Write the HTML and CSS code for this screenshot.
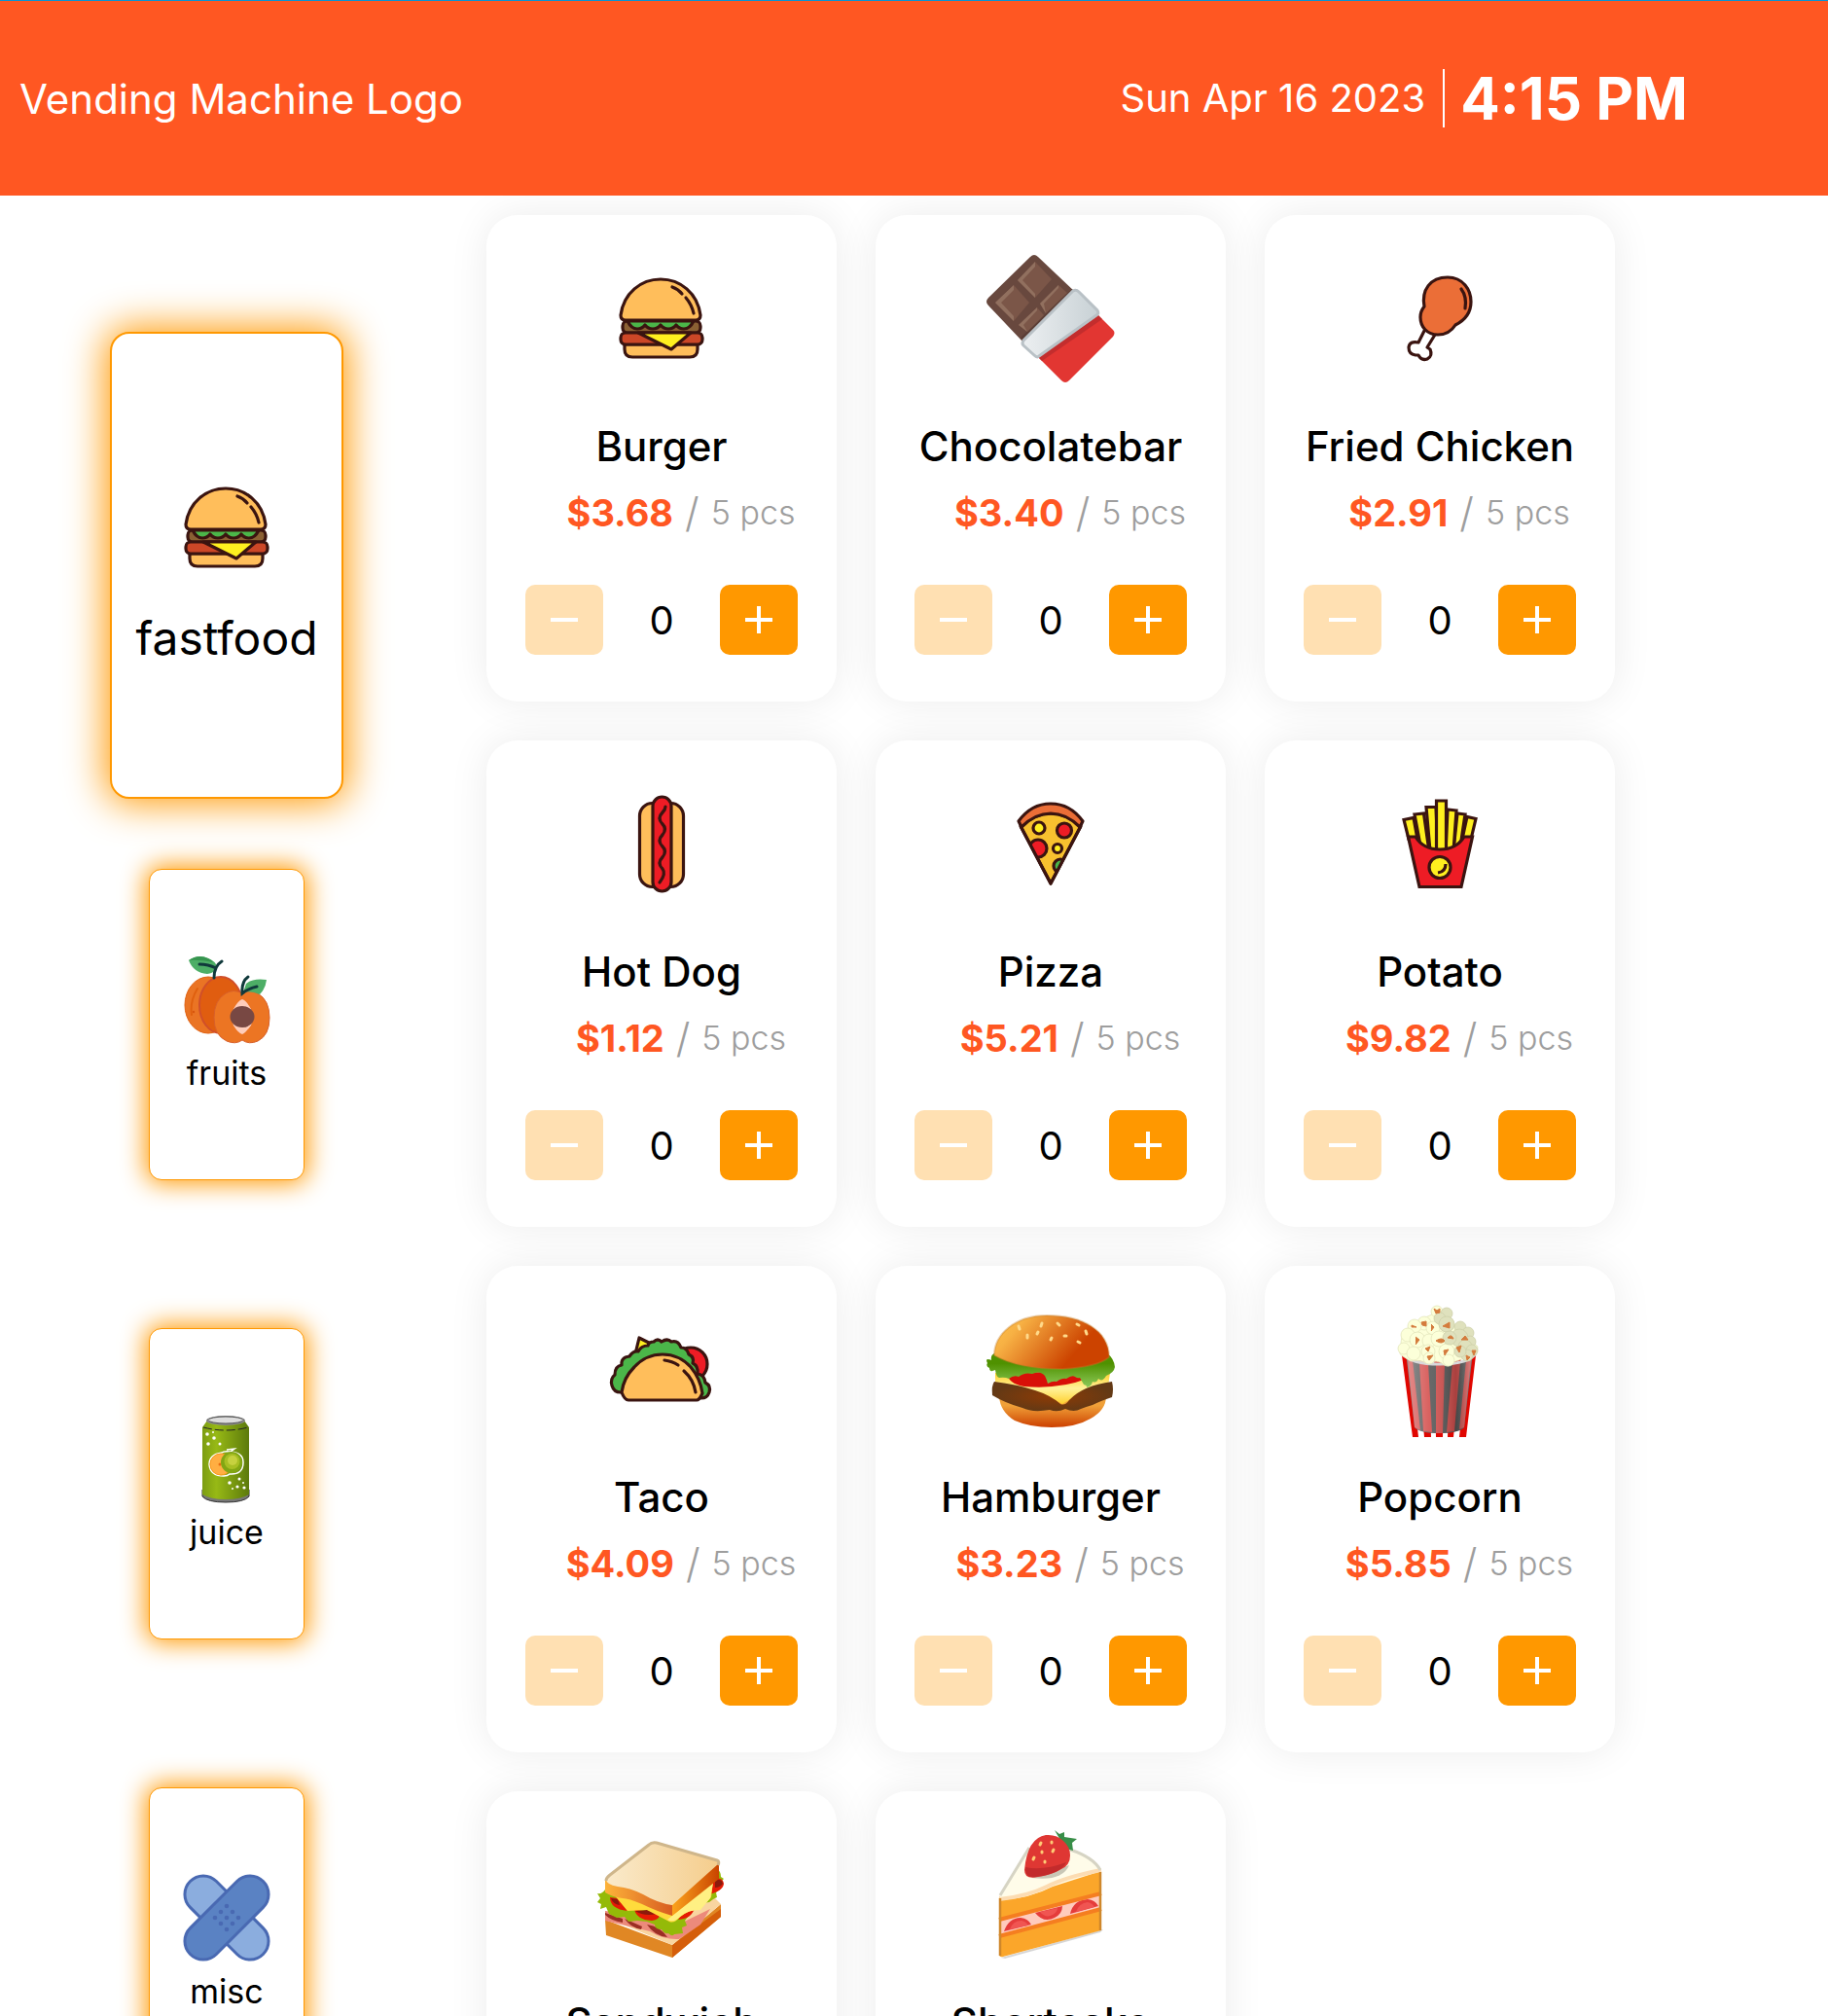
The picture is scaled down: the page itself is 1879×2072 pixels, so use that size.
FILE: index.html
```html
<!DOCTYPE html>
<html lang="en">
<head>
<meta charset="utf-8">
<meta name="viewport" content="width=device-width, initial-scale=1">
<title>Vending Machine</title>
<link rel="stylesheet" href="styles.css">
</head>
<body>
<svg class="defs" aria-hidden="true">
  <defs>
    <symbol id="burger" viewBox="0 0 132 132">
      <g stroke="#3a1410" stroke-width="3.2" stroke-linejoin="round" stroke-linecap="round">
        <path fill="#ffbe5b" d="M28 93h75v5q0 8-8 8H36q-8 0-8-8z"/>
        <rect x="26" y="69" width="80" height="12" rx="5" fill="#8b6033"/>
        <path fill="#4bb649" d="M31 69q4 8 10 8 5 0 8-4 3 4 8 4t8-4q3 4 8 4t8-4q3 4 8 4 6 0 10-8z"/>
        <rect x="24" y="81" width="84" height="12" rx="5" fill="#cc4727"/>
        <path fill="#fff01f" d="M42 81h54L76 98z"/>
        <path fill="#ffbe5b" d="M24 63C27 40 45 26 65 26S103 40 106 63q0 5-5 5H29q-5 0-5-5z"/>
        <path fill="none" d="M77 34q6 2 10 7M91 45q6 7 8 16"/>
      </g>
    </symbol>
    <symbol id="minus" viewBox="0 0 28 28"><path d="M0 14h28" stroke="#fff" stroke-width="4"/></symbol>
    <symbol id="plus" viewBox="0 0 28 28"><path d="M0 14h28M14 0v28" stroke="#fff" stroke-width="4"/></symbol>
    <linearGradient id="foil"><stop stop-color="#eceff1"/><stop offset="1" stop-color="#c8d1d5"/></linearGradient>
    <linearGradient id="bunTop" x2="1" y2=".4"><stop stop-color="#ffc24b"/><stop offset=".25" stop-color="#f7b144"/><stop offset=".85" stop-color="#cc4300"/></linearGradient>
    <linearGradient id="bunBase" x2="0" y2="1"><stop offset=".3" stop-color="#f0a038"/><stop offset="1" stop-color="#cc4000"/></linearGradient>
    <linearGradient id="leafy" x2="0" y2="1"><stop offset=".3" stop-color="#4f9100"/><stop offset="1" stop-color="#8cc95a"/></linearGradient>
    <linearGradient id="cheese" x2="0" y2="1"><stop stop-color="#ffd02e"/><stop offset=".5" stop-color="#fff29a"/><stop offset="1" stop-color="#ffd02e"/></linearGradient>
    <radialGradient id="patty"><stop stop-color="#8e3b05"/><stop offset="1" stop-color="#633915"/></radialGradient>
    <linearGradient id="bread"><stop stop-color="#faeacb"/><stop offset="1" stop-color="#f5cd8c"/></linearGradient>
    <linearGradient id="crustFront"><stop stop-color="#fdb33a"/><stop offset="1" stop-color="#d85d20"/></linearGradient>
    <linearGradient id="crustSide"><stop stop-color="#fba31c"/><stop offset="1" stop-color="#c94400"/></linearGradient>
    <linearGradient id="can"><stop stop-color="#7c9d12"/><stop offset=".3" stop-color="#97b915"/><stop offset="1" stop-color="#5c7a0c"/></linearGradient>
    <linearGradient id="bucketShade"><stop stop-color="#fff" stop-opacity=".35"/><stop offset=".35" stop-color="#fff" stop-opacity=".1"/><stop offset=".75" stop-color="#000" stop-opacity=".2"/><stop offset="1" stop-color="#fff" stop-opacity=".3"/></linearGradient>
  </defs>
</svg>

<header class="topbar">
  <div class="logo">Vending Machine Logo</div>
  <div class="clock">
    <span class="date">Sun Apr 16 2023</span>
    <time class="time" datetime="16:15">4:15 PM</time>
  </div>
</header>

<main class="shop">
  <nav class="categories" aria-label="Categories">
    <button class="category active" type="button">
      <svg class="category-icon" viewBox="0 0 132 132" aria-hidden="true"><use href="#burger"/></svg>
      <span class="category-name">fastfood</span>
    </button>
    <button class="category" type="button">
      <svg class="category-icon" viewBox="0 0 88 88" aria-hidden="true">
        <ellipse cx="25" cy="50" rx="24" ry="29" fill="#ea7424" stroke="#e0600f"/>
        <path d="M14 33q-8 13-6 27" fill="none" stroke="#e0600f" stroke-width="2" stroke-linecap="round"/><circle cx="10" cy="57" r="1.200" fill="#d8550f"/>
        <ellipse cx="38" cy="50" rx="22" ry="29" fill="#e05d10" stroke="#d04f2a" stroke-width="2"/>
        <path d="M60 38q-9-5-17 0-12 7-12 25 0 18 13 24 9 4 16-1 7 5 16 1 12-6 12-24 0-18-12-25-8-4-16 0z" fill="#ec7523" stroke="#d8602a"/>
        <path d="M60 44q4 1 9 10l2 8-2 9q-6 8-9 9-4-1-9-9l-2-9 2-8q5-9 9-10z" fill="#ffcdbb"/>
        <ellipse cx="60" cy="62" rx="12.500" ry="11" fill="#784843"/>
        <path d="M5 4Q15-3 25 2q8 3 9 9-2 6-10 7Q10 17 5 4z" fill="#4dae66"/><path d="M5 4Q15-3 25 2q4 2 5 4-15-3-25-2z" fill="#36954f"/>
        <path d="M85 24q-14-2-21 4l-3 9q8-2 17 2 6-6 7-15z" fill="#4dae66"/>
        <path d="M39 5q-8 5-8 17M16 8q9 0 17 4M66 21q-7 5-6 17 6-5 15-7" fill="none" stroke="#10393b" stroke-width="3" stroke-linecap="round"/>
      </svg>
      <span class="category-name">fruits</span>
    </button>
    <button class="category" type="button">
      <svg class="category-icon" viewBox="0 0 88 88" aria-hidden="true">
        <path d="M19 76v7q5 6 24 6t24-6v-7z" fill="#777" stroke="#333"/>
        <path d="M24 5L19 12v69q8 5 24 5t24-5V12L62 5z" fill="url(#can)"/>
        <ellipse cx="43" cy="5" rx="20" ry="5" fill="#888"/><ellipse cx="43" cy="4.500" rx="18" ry="3.500" fill="#ddd" stroke="#555"/>
        <path d="M20 12q23 6 46 0" fill="none" stroke="#222" stroke-dasharray="9 3"/>
        <path d="M48 37q-7-1-9 1-13 2-13 12 1 12 15 12 4 0 6-2 14 1 14-12 0-10-13-11l4-3-8 1" fill="none" stroke="#fff" stroke-width="1.500"/>
        <circle cx="38" cy="50" r="11" fill="#ffae42" stroke="#fa9a20"/><circle cx="37" cy="50" r="1.500" fill="#e76c10"/>
        <circle cx="49" cy="48" r="11" fill="#82a613"/><circle cx="49.500" cy="47" r="8" fill="#a8bf23"/><circle cx="50" cy="46" r="5" fill="#c6d13f"/>
        <g fill="#fff"><circle cx="24" cy="19" r="1.800"/><circle cx="31" cy="23" r="1.800"/><circle cx="25" cy="29" r="1.800"/><circle cx="37" cy="29" r="1.500"/><circle cx="30" cy="17" r="1"/><circle cx="47" cy="69" r="1.800"/><circle cx="57" cy="65" r="1.500"/><circle cx="55" cy="73" r="1.600"/><circle cx="62" cy="74" r="1.600"/><circle cx="50" cy="75" r="1"/><circle cx="61" cy="69" r="1"/></g>
      </svg>
      <span class="category-name">juice</span>
    </button>
    <button class="category" type="button">
      <svg class="category-icon" viewBox="0 0 88 88" aria-hidden="true">
        <g stroke="#4969b2" stroke-width="3">
          <rect x="-9" y="25" width="106" height="38" rx="19" fill="#8badde" transform="rotate(45 44 44)"/>
          <rect x="-9" y="25" width="106" height="38" rx="19" fill="#5a82c3" transform="rotate(-45 44 44)"/>
        </g>
        <g fill="#4969b2"><circle cx="44" cy="32" r="2.300"/><circle cx="38" cy="38" r="2.300"/><circle cx="50" cy="38" r="2.300"/><circle cx="32" cy="44" r="2.300"/><circle cx="44" cy="44" r="2.300"/><circle cx="56" cy="44" r="2.300"/><circle cx="38" cy="50" r="2.300"/><circle cx="50" cy="50" r="2.300"/><circle cx="44" cy="56" r="2.300"/></g>
      </svg>
      <span class="category-name">misc</span>
    </button>
  </nav>

  <section class="products" aria-label="Products">
    <article class="card">
      <svg class="card-icon" viewBox="0 0 132 132" aria-hidden="true"><use href="#burger"/></svg>
      <h2 class="card-name">Burger</h2>
      <p class="card-price"><strong>$3.68</strong> <span class="slash">/</span> <span class="stock">5 pcs</span></p>
      <div class="stepper"><button class="step" type="button" disabled aria-label="Remove Burger"><svg class="sign"><use href="#minus"/></svg></button><output class="count">0</output><button class="step" type="button" aria-label="Add Burger"><svg class="sign"><use href="#plus"/></svg></button></div>
    </article>

    <article class="card">
      <svg class="card-icon" viewBox="0 0 132 132" aria-hidden="true">
        <path d="M45 3q4-4 8 0l38 36-53 52L2 53q-4-4 0-8z" fill="#68483e"/>
        <path d="M88 36l4 4-53 50-4-4z" fill="#4e342e" opacity=".5"/>
        <g fill="#7b5648"><path d="M50 8l17 18-17 19-18-18z"/><path d="M28 32l16 18-16 19L9 50z"/><path d="M74 32l9 8-22 21-6-10z"/><path d="M52 55l7 8-17 17-9-7z"/></g>
        <path d="M50 8v5L37 27l13 14v4L32 27zM28 32v5L15 50l13 14v5L9 50zM74 32v3L59 51l2 10-6-10zM52 55v3L38 73l4 7-9-7z" fill="#91705f"/>
        <path d="M115 63l15 15q3 3 0 7l-45 45q-4 4-8 0L53 106z" fill="#e23632"/>
        <path d="M115 63l4 4-62 43-4-4z" fill="#b72a2b" opacity=".7"/>
        <path d="M89 38q3-2 6 1l19 19q2 3-1 5l-59 42q-2 2-5-1L38 94q-2-2 0-5z" fill="url(#foil)" stroke="#b9c1c6" stroke-width="3"/>
      </svg>
      <h2 class="card-name">Chocolatebar</h2>
      <p class="card-price"><strong>$3.40</strong> <span class="slash">/</span> <span class="stock">5 pcs</span></p>
      <div class="stepper"><button class="step" type="button" disabled aria-label="Remove Chocolatebar"><svg class="sign"><use href="#minus"/></svg></button><output class="count">0</output><button class="step" type="button" aria-label="Add Chocolatebar"><svg class="sign"><use href="#plus"/></svg></button></div>
    </article>

    <article class="card">
      <svg class="card-icon" viewBox="0 0 132 132" aria-hidden="true">
        <g stroke="#3a1410" stroke-width="3.200" stroke-linejoin="round" stroke-linecap="round">
          <path fill="#fff" d="M51 77l-7 14q-9-2-10 5 0 7 7 8h3q3 6 9 4 6-3 3-10l-3-2 8-13z"/>
          <path fill="#eb6e37" d="M50 54C47 37 56 24 74 24c16 0 24 13 24 25 0 13-8 20-16 24-5 8-11 10-18 10-11 0-18-8-18-18q0-6 4-11z"/>
          <path fill="none" d="M88 36q6 8 4 20"/>
        </g>
      </svg>
      <h2 class="card-name">Fried Chicken</h2>
      <p class="card-price"><strong>$2.91</strong> <span class="slash">/</span> <span class="stock">5 pcs</span></p>
      <div class="stepper"><button class="step" type="button" disabled aria-label="Remove Fried Chicken"><svg class="sign"><use href="#minus"/></svg></button><output class="count">0</output><button class="step" type="button" aria-label="Add Fried Chicken"><svg class="sign"><use href="#plus"/></svg></button></div>
    </article>

    <article class="card">
      <svg class="card-icon" viewBox="0 0 132 132" aria-hidden="true">
        <g stroke="#3a1410" stroke-width="3.200" stroke-linecap="round">
          <rect x="43.500" y="24.500" width="45" height="86" rx="13" fill="#ffbe5b"/>
          <rect x="57" y="18" width="19" height="97" rx="9.500" fill="#ee1c25"/>
          <path fill="none" d="M70 28q0 3-3 6-6 6 0 12 5 5 0 11-6 6 0 12 5 5 0 11-6 6 0 12 4 5-3 14"/>
        </g>
      </svg>
      <h2 class="card-name">Hot Dog</h2>
      <p class="card-price"><strong>$1.12</strong> <span class="slash">/</span> <span class="stock">5 pcs</span></p>
      <div class="stepper"><button class="step" type="button" disabled aria-label="Remove Hot Dog"><svg class="sign"><use href="#minus"/></svg></button><output class="count">0</output><button class="step" type="button" aria-label="Add Hot Dog"><svg class="sign"><use href="#plus"/></svg></button></div>
    </article>

    <article class="card">
      <svg class="card-icon" viewBox="0 0 132 132" aria-hidden="true">
        <clipPath id="slice"><path d="M36 48Q66 22 96 48L66 107z"/></clipPath>
        <g stroke="#3a1410" stroke-width="3.200" stroke-linejoin="round">
          <path fill="#f8c12f" d="M35 48Q66 22 97 48L66 107z"/>
          <g clip-path="url(#slice)"><circle cx="53" cy="71" r="9" fill="#ee1c25"/><circle cx="76" cy="89" r="7" fill="#4bb649"/></g>
          <circle cx="54" cy="50" r="6" fill="#fff01f"/><circle cx="80" cy="52.500" r="7.500" fill="#ee1c25"/><circle cx="73" cy="71" r="4.500" fill="#fff01f"/>
          <path fill="none" d="M35 48L66 107 97 48"/>
          <path fill="#eb6e37" d="M33 43Q46 25 66 25t33 18l-3 6Q82 35 66 35T36 49z"/>
        </g>
      </svg>
      <h2 class="card-name">Pizza</h2>
      <p class="card-price"><strong>$5.21</strong> <span class="slash">/</span> <span class="stock">5 pcs</span></p>
      <div class="stepper"><button class="step" type="button" disabled aria-label="Remove Pizza"><svg class="sign"><use href="#minus"/></svg></button><output class="count">0</output><button class="step" type="button" aria-label="Add Pizza"><svg class="sign"><use href="#plus"/></svg></button></div>
    </article>

    <article class="card">
      <svg class="card-icon" viewBox="0 0 132 132" aria-hidden="true">
        <g stroke="#3a1410" stroke-width="3.200" fill="#fff01f">
          <path d="M29 41.500l10-2 4 22H34z"/><path d="M103 40.500l-9-2-5 23h9z"/>
          <path d="M40 36l9.500-1L55 74l-9-6z"/><path d="M92 36l-8-1-4 38 8-10z"/>
          <path d="M52 28.500h10L64 74h-8z"/><path d="M83 32l-9-1-2 43h8z"/>
          <path d="M62.500 22h10v52h-10z"/>
          <path fill="#ee1c25" d="M33.500 59H41q8 13 25 13t25-13h8.500L88 110.500H45z"/>
          <circle cx="66" cy="90.500" r="11"/>
          <path fill="none" d="M72 87q0 8-8 9"/>
        </g>
      </svg>
      <h2 class="card-name">Potato</h2>
      <p class="card-price"><strong>$9.82</strong> <span class="slash">/</span> <span class="stock">5 pcs</span></p>
      <div class="stepper"><button class="step" type="button" disabled aria-label="Remove Potato"><svg class="sign"><use href="#minus"/></svg></button><output class="count">0</output><button class="step" type="button" aria-label="Add Potato"><svg class="sign"><use href="#plus"/></svg></button></div>
    </article>

    <article class="card">
      <svg class="card-icon" viewBox="0 0 132 132" aria-hidden="true">
        <g stroke="#3a1410" stroke-width="3.200" stroke-linejoin="round" stroke-linecap="round">
          <path fill="#fff01f" d="M43 34l22 11-28 14z"/>
          <circle cx="96" cy="61" r="17" fill="#ee1c25"/>
          <path fill="#4bb649" d="M24 90q-7 0-9-7-2-7 3-11 0-9 7-10-1-8 8-9 4-6 9-5 3-6 10-6 1-4 6-4 4-4 8 0 6-4 10 0 7-2 10 6 6 0 8 7 6 3 4 9 6 3 5 11 7 1 8 9 6 3 4 10-2 6-8 6z"/>
          <path fill="#ffbe5b" d="M25 90q2-15 13-26 12-13 29-13 17 0 29 13 10 12 12 27-3 7-6 7H32q-4 0-7-8z"/>
          <path fill="none" d="M69 57q8 1 14 5M89 68q10 9 12 22"/>
        </g>
      </svg>
      <h2 class="card-name">Taco</h2>
      <p class="card-price"><strong>$4.09</strong> <span class="slash">/</span> <span class="stock">5 pcs</span></p>
      <div class="stepper"><button class="step" type="button" disabled aria-label="Remove Taco"><svg class="sign"><use href="#minus"/></svg></button><output class="count">0</output><button class="step" type="button" aria-label="Add Taco"><svg class="sign"><use href="#plus"/></svg></button></div>
    </article>

    <article class="card">
      <svg class="card-icon" viewBox="0 0 132 132" aria-hidden="true">
        <path d="M13 94q1 16 16 25 16 7 38 7 25 0 40-9 16-9 16-23z" fill="url(#bunBase)"/>
        <path d="M9 70h118l-2 14q-25 4-47 18-22-13-69-20z" fill="url(#cheese)"/>
        <path d="M21 70q1 11 18 14 36 3 64-8V68z" fill="#d80f08"/>
        <path d="M8 79q24 3 42 9 16 5 26 14 5 2 9-4 14-15 44-19 2 8 0 16-12 4-20 8-7 2-12 4-7 4-16 0-8 4-16 1-18 3-28-2-18-5-31-13-1-10 2-14z" fill="url(#patty)"/>
        <path d="M8 50q-4 2-3 7-7-3-4 3-2 3 2 5 0 5 6 2 1 7 4 8 6-1 10 1 5-4 10-2 6-5 14-3 8-4 13 2 2 4 3 8 5-3 9-2 6-4 10-3 6-4 9-2 3 2 5 1l4 7q4 1 3 3 5-1 6-6 4 2 6-3 4 4 8-3 8-3 9-9-1-9-8-14z" fill="url(#leafy)"/>
        <path d="M8 52C8 30 30 11 62 11c36 0 64 15 64 43q-12 10-48 12-46 0-70-14z" fill="url(#bunTop)" stroke="#c27a25" stroke-opacity=".35" stroke-width="2"/>
        <g stroke="#ffd98a" stroke-width="3" stroke-linecap="round"><path d="M33 22l1 3M57 19l-1 3M73 19l2 2M93 20l2 1M42 31v3M53 28l-1 2M67 34l-1 2M80 32h2M102 27l1 3M94 38l2 1"/></g>
      </svg>
      <h2 class="card-name">Hamburger</h2>
      <p class="card-price"><strong>$3.23</strong> <span class="slash">/</span> <span class="stock">5 pcs</span></p>
      <div class="stepper"><button class="step" type="button" disabled aria-label="Remove Hamburger"><svg class="sign"><use href="#minus"/></svg></button><output class="count">0</output><button class="step" type="button" aria-label="Add Hamburger"><svg class="sign"><use href="#plus"/></svg></button></div>
    </article>

    <article class="card">
      <svg class="card-icon" viewBox="0 0 132 132" aria-hidden="true">
        <path fill="#e00600" d="M27 52h8l9 84h-6zM43 52h11l3 84h-7zM60 52h11l-2 84h-7zM77 52h11l-8 84h-6zM95 52h8L93 136h-7z"/>
        <path d="M32 56q33 10 67 0L91 126q-6 6-26 6-19 0-25-6z" fill="#585858"/>
        <path fill="#d4504e" d="M33 56l5 1 8 72-6-3zM45 60h9l4 71-9-1zM62 60h9l-2 72h-7zM79 59h8l-6 71-8 1zM93 57l5-1-7 70-5 2z"/>
        <path d="M32 56q33 10 67 0L91 126q-6 6-26 6-19 0-25-6z" fill="url(#bucketShade)"/>
        <path d="M28 50q8 11 38 11t37-11" fill="none" stroke="#d8d8da" stroke-width="3"/>
        <g fill="#fcffd9" stroke="#e3e6bd" stroke-width=".8">
          <path d="M63 2q-6 1-5 8l-7 3q-7 1-6 6-8-3-10 4-7 3-8 10-2 9 0 12-5 5 1 8l8 5q10-2 16 2 12-4 17 1 6 5 10-2 12-3 14-6 13-3 12-10z"/>
          <circle cx="63" cy="7" r="6"/><circle cx="50" cy="19" r="7"/><circle cx="40" cy="22" r="7"/><circle cx="33" cy="31" r="7"/><circle cx="59" cy="24" r="7"/><circle cx="43" cy="36" r="8"/><circle cx="29" cy="45" r="6"/><circle cx="55" cy="37" r="7"/><circle cx="65" cy="35" r="8"/><circle cx="39" cy="50" r="7"/><circle cx="54" cy="48" r="7"/><circle cx="55" cy="55" r="6"/><circle cx="73" cy="48" r="8"/><circle cx="75" cy="57" r="6"/>
        </g>
        <g fill="#dfe1bd" stroke="#ced0a9" stroke-width=".8"><circle cx="73" cy="9" r="6"/><circle cx="66" cy="14" r="6"/><circle cx="73" cy="20" r="8"/><circle cx="87" cy="23" r="6"/><circle cx="95" cy="29" r="6"/><circle cx="86" cy="34" r="9"/><circle cx="97" cy="38" r="6"/><circle cx="76" cy="34" r="7"/><circle cx="92" cy="43" r="7"/><circle cx="99" cy="47" r="6"/><circle cx="94" cy="52" r="6"/><circle cx="87" cy="48" r="6"/></g>
        <path d="M60 4l3 2 3-2v4l-4 1zM47 18l5-1v5l-4-1zM37 21l5 2h-5zM57 20l3 3-3 4M41 33l4 3-4 5M62 37q6-4 9 0-3 4-9 0zM69 22l7-4v6zM75 33q3-3 5 2l-6-1zM88 36l4-4 3 4zM51 45l5-2-2 5zM70 47l5-1-4 6zM83 44l5-2-2 7zM93 52l4 2-3 3zM99 47h4l-2 5zM53 53l6-1-4 5z" fill="#d47b3c" stroke="#d47b3c" stroke-linejoin="round"/>
      </svg>
      <h2 class="card-name">Popcorn</h2>
      <p class="card-price"><strong>$5.85</strong> <span class="slash">/</span> <span class="stock">5 pcs</span></p>
      <div class="stepper"><button class="step" type="button" disabled aria-label="Remove Popcorn"><svg class="sign"><use href="#minus"/></svg></button><output class="count">0</output><button class="step" type="button" aria-label="Add Popcorn"><svg class="sign"><use href="#plus"/></svg></button></div>
    </article>

    <article class="card">
      <svg class="card-icon" viewBox="0 0 132 132" aria-hidden="true">
        <path d="M8 92l69 26 50-42v13l-50 42L9 108z" fill="#e08724"/>
        <path d="M77 118l50-37v8l-50 42z" fill="#d55e0a"/>
        <path d="M9 90l68 28 50-42-8-8-90 10z" fill="#f9d5a0"/>
        <path d="M8 83l20 2 55 12 33-16-10 16-22 15q-15 1-30-8L8 93z" fill="#ec8a7b"/>
        <path d="M8 85l18 6v4q-12-2-18-8zM28 91l18 8-1 3q-11-2-17-11zM51 97q14 2 21 13-13-1-21-13z" fill="#9b2f24"/>
        <path d="M8 61q-3 5-8 4l3 5-3 4 4 2-1 5 6-2 3 7 8 4 8-1 4 5 9-1 10 1 8 3q0 5 7 5 3 5 7 4 4 4 6 1l9-1-1-6 5-2-2-5 6-8 12-10 7-1q5-4 8-5l-1-5 5-4-2-5 5-5-3-2q0-6-4-8z" fill="#94ba08"/>
        <path d="M13 69q0 12 18 14l-10-13zM38 81q2 11 18 12 8-1 8-6zM85 89l15-10q-2 12-17 13zM119 50q10-2 11 5-1 8-16 11z" fill="#e51b05"/><path d="M14 70q2 6 9 7l-2-6zM39 83q9 6 22 3l-10-4zM121 51q7-1 8 4-3 4-8 4z" fill="#8b1a0c"/>
        <path d="M16 65l15 18 20-1 23 12q5 2 10-4 9-8 22-9l11-12 2-16z" fill="#ffdb3c"/><path d="M77 88l42-34-3 16-10 12q-13 0-20 6-7 8-14 4z" fill="#fff083"/>
        <path d="M8 50l69 27v11Q60 83 46 76q-14-6-20-6-10-1-18-6z" fill="url(#crustFront)"/>
        <path d="M77 77l48-46v19L77 88z" fill="url(#crustSide)"/>
        <path d="M53 15q3-4 8-2l62 18q3 1 1 4L77 77q-15-2-30-11-14-7-26-8-12-2-12-8z" fill="url(#bread)"/>
        <path d="M9 52q0-3 4-6l40-31q3-3 8-2l62 18q3 1 1 5" fill="none" stroke="#cfb68b" stroke-width="3"/>
      </svg>
      <h2 class="card-name">Sandwich</h2>
      <p class="card-price"><strong>$4.50</strong> <span class="slash">/</span> <span class="stock">5 pcs</span></p>
      <div class="stepper"><button class="step" type="button" disabled aria-label="Remove Sandwich"><svg class="sign"><use href="#minus"/></svg></button><output class="count">0</output><button class="step" type="button" aria-label="Add Sandwich"><svg class="sign"><use href="#plus"/></svg></button></div>
    </article>

    <article class="card">
      <svg class="card-icon" viewBox="0 0 132 132" aria-hidden="true">
        <path d="M15 131l105-29-3 3-98 27z" fill="#bbb" opacity=".6"/>
        <path d="M13 68l105-27v62L17 130q-4 1-4-3z" fill="#fba62a"/>
        <path d="M13 91l105-27v17L13 108z" fill="#ffcbbd"/>
        <path d="M18 104q5-14 17-14 8 1 11 7zM50 85q9 11 20 5 8-4 8-12zM86 86q3-14 18-15 8 1 11 7z" fill="#e53c3b"/><path d="M24 102q3-9 12-9 5 1 7 5zM55 84q6 7 13 3 5-3 5-7zM92 84q3-9 12-10 5 1 7 5z" fill="#f05552"/>
        <path d="M13 92l105-27M13 109l105-28" stroke="#f57e20" stroke-width="4"/>
        <path d="M44 18l-31 51 2 3q30-2 53-14l50-16Q110 22 60 15z" fill="#fffce9"/>
        <path d="M13 71q29-3 49-13t56-17" fill="none" stroke="#fcdcb2" stroke-width="4"/>
        <path d="M44 18L14 67M86 20q24 8 31 21" fill="none" stroke="#d6d4c4" stroke-width="3"/>
        <path d="M14 70v59M117 43v60" stroke="#cf872b" stroke-width="2.500"/>
        <path d="M46 49q32 4 39-13l-6 2z" fill="#c9c7b6"/>
        <path d="M70 0l5 4 5-2v5l13 2-5 4 1 8-8-2z" fill="#388e48"/>
        <path d="M61 5q11-1 18 6 7 6 7 15 0 10-9 14-10 6-24 8-14 3-14-7Q42 8 61 5z" fill="#df3733"/>
        <path d="M40 38q18 4 42-5-3 6-9 9-10 5-22 6-12 2-11-10z" fill="#b7262a" opacity=".7"/>
        <g stroke="#ffca75" stroke-width="3" stroke-linecap="round"><path d="M56 13l-1 2M67 12v1M57 22v1M69 20l-1 2M49 28l-1 2M60 32v1"/></g>
      </svg>
      <h2 class="card-name">Shortcake</h2>
      <p class="card-price"><strong>$6.20</strong> <span class="slash">/</span> <span class="stock">5 pcs</span></p>
      <div class="stepper"><button class="step" type="button" disabled aria-label="Remove Shortcake"><svg class="sign"><use href="#minus"/></svg></button><output class="count">0</output><button class="step" type="button" aria-label="Add Shortcake"><svg class="sign"><use href="#plus"/></svg></button></div>
    </article>
  </section>
</main>
</body>
</html>
```
FILE: styles.css
```css
* { box-sizing: border-box; }

body {
  margin: 0;
  height: 100vh;
  display: flex;
  flex-direction: column;
  overflow: hidden;
  background: #fff;
  color: #000;
  font-family: Inter, "Open Sans", sans-serif;
  font-size: 42px;
}

button {
  font: inherit;
  color: inherit;
  padding: 0;
  border: 0;
}

.defs {
  position: absolute;
  width: 0;
  height: 0;
}

.topbar {
  position: relative;
  z-index: 1;
  flex: none;
  display: flex;
  align-items: center;
  justify-content: space-between;
  min-height: 201px;
  padding: 0 144px 0 20px;
  border-top: 1px solid #0a93d1;
  background: #ff5722;
  color: #fff;
}

.clock {
  display: flex;
  align-items: center;
}

.date {
  padding-right: 18px;
  border-right: 2px solid #fff;
  font-size: 40px;
  line-height: 60px;
}

.time {
  padding-left: 16px;
  font-size: 60px;
  font-weight: 700;
}

.shop {
  flex: 1;
  min-height: 0;
  display: grid;
  grid-template-columns: 466px 1fr;
  overflow-y: auto;
  scrollbar-width: none;
}

.categories {
  display: grid;
  grid-auto-rows: 472px;
  align-content: start;
  place-items: center;
  padding-top: 144px;
}

.category {
  display: flex;
  flex-direction: column;
  align-items: center;
  justify-content: center;
  width: 160px;
  height: 320px;
  border: 1px solid #ff9800;
  border-radius: 13px;
  background: #fff;
  box-shadow: 0 0 26px 3px #ff9800;
  font-size: 34px;
  line-height: 40px;
}

.category-icon {
  width: 88px;
  height: 88px;
  margin-bottom: 12px;
  overflow: visible;
}

.category.active {
  width: 240px;
  height: 480px;
  border-width: 2px;
  border-radius: 20px;
  box-shadow: 0 0 40px 4px #ff9800;
  font-size: 48px;
  line-height: 60px;
}

.active .category-icon {
  width: 132px;
  height: 132px;
  margin-bottom: 18px;
}

.products {
  display: grid;
  grid-template-columns: repeat(auto-fill, 360px);
  align-content: start;
  gap: 40px;
  padding: 20px 34px;
}

.card {
  display: flex;
  flex-direction: column;
  align-items: center;
  min-height: 500px;
  padding: 40px;
  border-radius: 32px;
  background: #fff;
  box-shadow: 0 0 40px rgba(0, 0, 0, 0.08);
}

.card-icon {
  width: 132px;
  height: 132px;
  margin-bottom: 40px;
  overflow: visible;
}

.card-name {
  margin: 0 0 16px;
  font-size: 42px;
  font-weight: 500;
  line-height: 52px;
  white-space: nowrap;
}

.card-price {
  display: flex;
  align-items: center;
  gap: 12px;
  margin: 0 0 48px;
  padding-left: 40px;
  line-height: 52px;
  color: #9e9e9e;
  white-space: nowrap;
}

.card-price strong {
  color: #ff5722;
  font-size: 38px;
  font-weight: 700;
}

.slash { font-weight: 300; }

.stock {
  font-size: 34px;
  font-weight: 300;
}

.stepper {
  display: flex;
  align-items: center;
  justify-content: space-between;
  width: 280px;
  height: 72px;
}

.count { font-size: 40px; }

.step {
  display: flex;
  align-items: center;
  justify-content: center;
  width: 80px;
  height: 72px;
  border-radius: 10px;
  background: #ff9800;
}

.step:disabled { background: #ffe0b2; }

.sign {
  width: 28px;
  height: 28px;
}
```
